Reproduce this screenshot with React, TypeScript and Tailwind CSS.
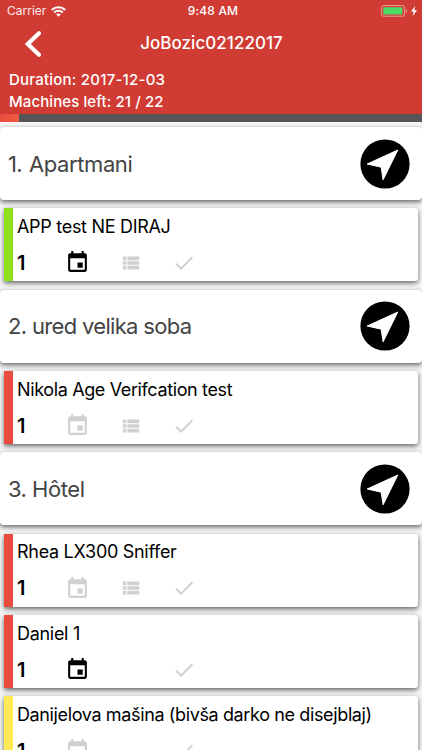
import React from "react";
import { MdEvent, MdViewList, MdCheck } from "react-icons/md";

const SHADOW = "shadow-[0_2px_5px_rgba(0,0,0,0.6)]";

function StatusBar() {
  return (
    <div className="grid h-[22px] grid-cols-3 items-center pl-[7px] pr-[5px] text-[12px] text-white">
      <div className="flex items-center gap-[5px]">
        <span className="text-white/90">Carrier</span>
        <svg width="15" height="11" viewBox="0 0 15 11" fill="none" stroke="white" strokeWidth="2.1">
          <path d="M0.8 4C4.5 0.4 10.5 0.4 14.2 4" />
          <path d="M3.2 6.4C5.6 4.1 9.4 4.1 11.8 6.4" />
          <path d="M7.5 10.8L5.2 8.4C6.5 7.2 8.5 7.2 9.8 8.4Z" fill="white" stroke="none" />
        </svg>
      </div>
      <span className="whitespace-nowrap pl-[2px] text-center font-medium tracking-[0.15px]">9:48 AM</span>
      <div className="flex items-center justify-end gap-[3px]">
        <svg width="27" height="12" viewBox="0 0 27 12">
          <rect x="0.6" y="0.6" width="23" height="10.6" rx="2.2" fill="none" stroke="#eda19b" strokeWidth="1" />
          <rect x="2.2" y="2.2" width="19.2" height="7.4" rx="0.8" fill="#4cd964" />
          <path d="M25 4v4c1.3-.6 1.3-3.4 0-4z" fill="#eda19b" />
        </svg>
        <svg width="6" height="10" viewBox="0 0 6 10" fill="white">
          <path d="M4.2 0L0 5.6h2.6L1.7 10L6 4.2H3.4z" />
        </svg>
      </div>
    </div>
  );
}

type SectionProps = { number: number; name: string; numberWidth?: string; spacing?: string };

function Section({ number, name, numberWidth = "w-[24px]", spacing = "tracking-[-0.4px]" }: SectionProps) {
  return (
    <div className={`flex h-[73px] shrink-0 items-center justify-between rounded-[4px] bg-white pl-[8px] pr-[12px] ${SHADOW}`}>
      <h2 className="flex text-[22px] leading-[28px] text-[#444]">
        <span className={`whitespace-nowrap tracking-[-0.6px] ${numberWidth}`}>{number}.</span>
        <span className={spacing}>{name}</span>
      </h2>
      <svg width="50" height="50" viewBox="0 0 50 50">
        <circle cx="25" cy="25" r="24.6" />
        <path d="M7.2 25L37.8 11L23.1 40.8L21.2 28.2Z" fill="white" stroke="white" strokeWidth="1" strokeLinejoin="round" />
      </svg>
    </div>
  );
}

type MachineProps = { name: string; stripe: string; scheduled?: boolean; list?: boolean; spacing?: string };

function Machine({ name, stripe, scheduled, list = true, spacing = "tracking-[-0.3px]" }: MachineProps) {
  return (
    <div className={`mx-[4px] flex h-[73px] shrink-0 rounded-r-[3px] bg-white ${SHADOW}`}>
      <div className={`w-[9px] shrink-0 ${stripe}`} />
      <div className="flex-1 pl-[4px] pt-[6.5px] text-black">
        <p className={`whitespace-nowrap text-[18px] leading-[24px] ${spacing}`}>{name}</p>
        <div className="mt-[11.5px] flex h-[25px] items-center text-[#d0d0d0]">
          <span className="w-[48px] pt-[1px] text-[20px] font-semibold leading-[25px] text-black">1</span>
          <MdEvent size={25} className={scheduled ? "text-black" : ""} />
          <span className="ml-[30px] w-[22px]">{list && <MdViewList size={22} />}</span>
          <MdCheck size={24} className="ml-[29.5px]" />
        </div>
      </div>
    </div>
  );
}

export default function App() {
  return (
    <div className="flex h-[750px] w-[422px] flex-col overflow-hidden bg-[#f5f5f5] font-[Inter,sans-serif]">
      <header className="h-[114px] shrink-0 bg-[#d03b34] text-white">
        <StatusBar />
        <div className="grid h-[43px] grid-cols-[60px_1fr_60px] items-center">
          <svg className="ml-[24px]" width="19" height="28" viewBox="0 0 19 28" fill="none" stroke="white" strokeWidth="4.2">
            <path d="M15 3.2L3.8 14L15 24.8" strokeLinecap="round" />
          </svg>
          <h1 className="pl-[1px] pt-[1px] text-center text-[17px] font-medium tracking-[0.05px]">JoBozic02122017</h1>
        </div>
        <div className="pl-[9px] pt-[3.5px] text-[15px] font-medium leading-[22.3px]">
          <p className="tracking-[0.22px]">Duration: 2017-12-03</p>
          <p className="tracking-[0.1px]">Machines left: 21 / 22</p>
        </div>
      </header>
      <div className="h-[8px] shrink-0 bg-[#555]">
        <div className="h-full w-[19px] bg-gradient-to-r from-[#e74c3c] to-[#f25a43]" />
      </div>
      <main className="flex min-h-0 flex-1 flex-col gap-[8.35px] overflow-hidden pt-[5px]">
        <Section number={1} name="Apartmani" numberWidth="w-[21px]" />
        <Machine name="APP test NE DIRAJ" stripe="bg-[#8de01b]" scheduled />
        <Section number={2} name="ured velika soba" spacing="tracking-[-0.68px]" />
        <Machine name="Nikola Age Verifcation test" stripe="bg-[#e74c3f]" spacing="tracking-[-0.37px]" />
        <Section number={3} name="Hôtel" />
        <Machine name="Rhea LX300 Sniffer" stripe="bg-[#e74c3f]" />
        <Machine name="Daniel 1" stripe="bg-[#e74c3f]" scheduled list={false} />
        <Machine
          name="Danijelova mašina (bivša darko ne disejblaj)"
          stripe="bg-[#ffeb55]"
          list={false}
          spacing="tracking-[-0.37px]"
        />
      </main>
    </div>
  );
}
